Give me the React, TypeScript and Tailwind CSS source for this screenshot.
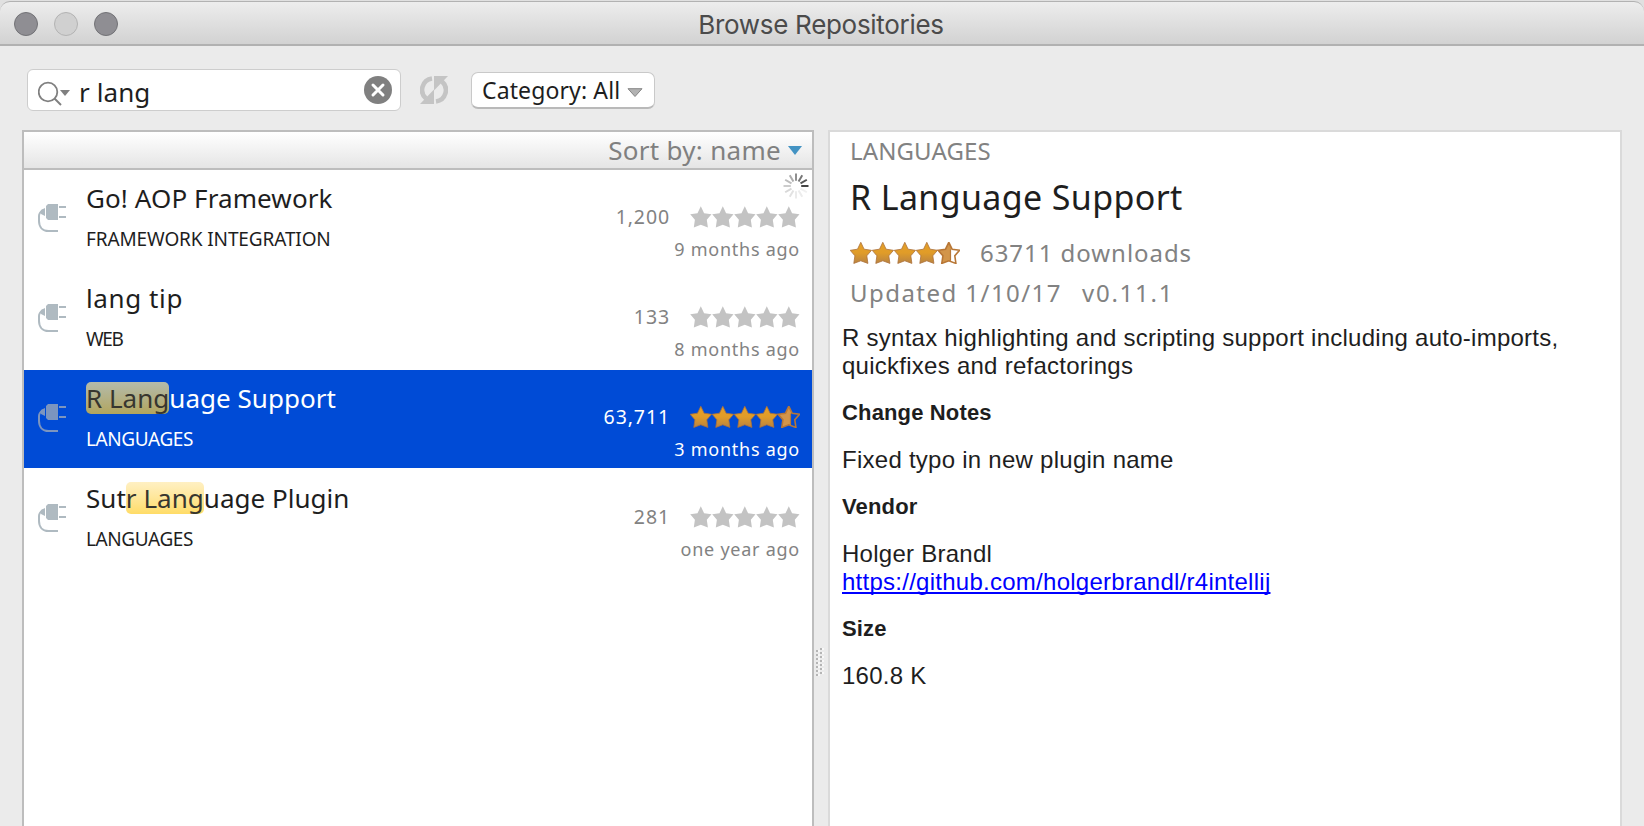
import { clsx } from 'clsx';

const STAR = 'M10.8 .3 L14.1 7.2 L21.5 8.3 L16.8 13.8 L17.9 21.4 L10.8 18.8 L3.8 21.4 L4.9 13.8 L.2 8.3 L7.5 7.2 Z';

type Plugin = {
  name: [string, string, string];
  nameClass: string;
  category: string;
  categoryClass: string;
  downloads: string;
  downloadsClass: string;
  updated: string;
  rating: number;
  selected?: boolean;
};

const plugins: Plugin[] = [
  {
    name: ['Go! AOP Framework', '', ''],
    nameClass: 'tracking-[0.1px]',
    category: 'FRAMEWORK INTEGRATION',
    categoryClass: 'tracking-[-0.12px]',
    downloads: '1,200',
    downloadsClass: 'tracking-[0.9px]',
    updated: '9 months ago',
    rating: 0,
  },
  {
    name: ['lang tip', '', ''],
    nameClass: 'tracking-[0.6px]',
    category: 'WEB',
    categoryClass: 'tracking-[-1.4px]',
    downloads: '133',
    downloadsClass: 'tracking-[0.9px]',
    updated: '8 months ago',
    rating: 0,
  },
  {
    name: ['', 'R Lang', 'uage Support'],
    nameClass: 'tracking-[0.02px]',
    category: 'LANGUAGES',
    categoryClass: 'tracking-[-0.4px]',
    downloads: '63,711',
    downloadsClass: 'tracking-[0.9px]',
    updated: '3 months ago',
    rating: 4.5,
    selected: true,
  },
  {
    name: ['Sut', 'r Lang', 'uage Plugin'],
    nameClass: 'tracking-[0.03px]',
    category: 'LANGUAGES',
    categoryClass: 'tracking-[-0.4px]',
    downloads: '281',
    downloadsClass: 'tracking-[0.9px]',
    updated: 'one year ago',
    rating: 0,
  },
];

function Stars({ rating }: { rating: number }) {
  return (
    <svg width="110" height="22" viewBox="0 0 110 22" className="shrink-0">
      <defs>
        <linearGradient id="gold" x1="0" y1="0" x2="0" y2="1">
          <stop offset="0" stopColor="#e5a029" />
          <stop offset="0.5" stopColor="#e09c28" />
          <stop offset="1" stopColor="#b98342" />
        </linearGradient>
        <clipPath id="leftHalf">
          <rect x="0" y="0" width="13" height="22" />
        </clipPath>
      </defs>
      {[0, 1, 2, 3, 4].map((i) => {
        const half = rating - i === 0.5;
        return (
          <g key={i} transform={`translate(${i * 22} 0)`}>
            {rating === 0 && <path d={STAR} fill="#c3c3c3" />}
            {rating > i && !half && <path d={STAR} fill="url(#gold)" stroke="#ac713b" strokeWidth="0.8" />}
            {half && (
              <>
                <path d={STAR} fill="#d2954a" clipPath="url(#leftHalf)" />
                <path d={STAR} fill="none" stroke="#b87736" strokeWidth="1.6" />
                <path d="M12.5 7.5 V18.5" stroke="#b87736" strokeWidth="1.2" />
              </>
            )}
          </g>
        );
      })}
    </svg>
  );
}

function PlugIcon({ color }: { color: string }) {
  return (
    <svg width="28" height="28" viewBox="0 0 28 28" className="mt-[34px] shrink-0">
      <path d="M10 0 H20 V16 H10 L8 14 V2 Z" fill={color} />
      <path d="M21 3 H28 M21 13 H28" stroke={color} strokeWidth="2" />
      <path d="M7 4 V12 L3 10 V6 Z" fill={color} />
      <path d="M5 6 C2 8 1 9 1 12 V17 C1 23 4.500 27 10.500 27 H20" fill="none" stroke={color} strokeWidth="2" />
    </svg>
  );
}

function PluginRow({ plugin }: { plugin: Plugin }) {
  const { selected } = plugin;
  const [before, match, after] = plugin.name;
  return (
    <li
      className={clsx(
        'mb-[2px] flex h-[98px] pr-3 pl-[14px]',
        selected ? 'bg-[#004bd6] text-white' : 'bg-white text-[#1e1e1e]',
      )}
    >
      <PlugIcon color={selected ? '#7c95bf' : '#afbac1'} />
      <div className="ml-5 flex-1 pt-[10px]">
        <div className={clsx('flex h-9 pt-[2px] text-[26px] leading-8 whitespace-pre', plugin.nameClass)}>
          <span>{before}</span>
          {match && (
            <mark
              className={clsx(
                'h-8 rounded-[5px] bg-linear-to-b text-[#37362f]',
                selected ? 'from-[#b4bbab] to-[#b2a55c]' : 'from-[#fff0c3] to-[#ffdc66]',
              )}
            >
              {match}
            </mark>
          )}
          <span>{after}</span>
        </div>
        <div className={clsx('mt-[11px] text-[19px] leading-6', plugin.categoryClass)}>{plugin.category}</div>
      </div>
      <div className={clsx('flex flex-col items-end pt-[34px]', !selected && 'text-[#828282]')}>
        <div className="flex h-6 items-end gap-[20px]">
          <span className={clsx('-mb-px text-[19.5px] leading-6', plugin.downloadsClass)}>{plugin.downloads}</span>
          <Stars rating={plugin.rating} />
        </div>
        <div className="mt-[9px] text-[18px] leading-6 tracking-[0.75px]">{plugin.updated}</div>
      </div>
    </li>
  );
}

const spokes = ['#444', '#f0f0f0', '#ececec', '#ebebeb', '#e2e2e2', '#d8d8d8', '#cccccc', '#bdbdbd', '#acacac', '#8f8f8f', '#777', '#555'];

function Spinner() {
  return (
    <svg width="26" height="26" viewBox="-13 -13 26 26" className="absolute top-[3px] right-[3px]">
      {spokes.map((c, i) => (
        <path key={i} d="M5.200 0 H12.500" stroke={c} strokeWidth="2" transform={`rotate(${i * 30})`} />
      ))}
    </svg>
  );
}

function TitleBar() {
  return (
    <header className="h-[46px] bg-[#e0e0e0] pt-[1px]">
      <div className="flex h-[45px] items-start rounded-t-[10px] border-t border-b-2 border-t-[#b2b2b2] border-b-[#b1b1b1] bg-linear-to-b from-[#ededed] to-[#d2d2d2] pl-[14px]">
        <div className="flex w-[240px] gap-4 pt-[10px]">
          <span className="size-6 rounded-full border border-[#727276] bg-[#8f8e93]" />
          <span className="size-6 rounded-full border border-[#b3b3b3] bg-[#d0d0d0]" />
          <span className="size-6 rounded-full border border-[#727276] bg-[#8f8e93]" />
        </div>
        <h1 className="mr-[256px] flex-1 pt-[9px] text-center font-['Inter',sans-serif] text-[26px] leading-7 tracking-[-0.3px] text-[#4b4b4b]">
          Browse Repositories
        </h1>
      </div>
    </header>
  );
}

function Toolbar() {
  return (
    <div className="flex h-[84px] items-start pt-[23px] pl-[27px]">
      <div className="flex h-[42px] w-[374px] rounded-[6px] border border-[#cdcdcd] bg-white pr-2 pl-[10px]">
        <svg width="34" height="26" viewBox="0 0 34 26" className="mt-[11px] shrink-0">
          <circle cx="10" cy="11" r="9.300" fill="none" stroke="#808080" strokeWidth="1.800" />
          <path d="M16.500 17.500 L23 24" stroke="#808080" strokeWidth="2" />
          <path d="M22 9 H32 L27 15 Z" fill="#808080" />
        </svg>
        <span className="ml-[7px] flex-1 pt-[6px] text-[26px] leading-8 tracking-[0.1px] text-[#1e1e1e]">r lang</span>
        <svg width="28" height="28" viewBox="0 0 28 28" className="mt-[6px] shrink-0">
          <circle cx="14" cy="14" r="14" fill="#808080" />
          <path d="M9 9 L19 19 M19 9 L9 19" stroke="#fff" strokeWidth="3" strokeLinecap="round" />
        </svg>
      </div>
      <svg width="28" height="28" viewBox="0 0 28 28" className="mt-[7px] ml-[19px] shrink-0">
        <path d="M12 2.500 A11.500 11.500 0 0 0 6 22.500" fill="none" stroke="#c4c4c4" strokeWidth="4.600" />
        <path d="M16 25.500 A11.500 11.500 0 0 0 22 5.500" fill="none" stroke="#c4c4c4" strokeWidth="4.600" />
        <path d="M14 13.500 V28 H0 Z M14 14.500 V0 H28 Z" fill="#c4c4c4" />
      </svg>
      <div className="mt-[3px] ml-[23px] flex h-[37px] w-[184px] rounded-[7px] border border-b-2 border-[#c9c9c9] border-b-[#b9b9b9] bg-white pl-[10px]">
        <span className="text-[23px] leading-[34px] tracking-[0.12px] whitespace-nowrap text-[#1e1e1e]">Category: All</span>
        <svg width="16" height="10" viewBox="0 0 16 10" className="mt-[15px] ml-[7px] shrink-0">
          <path d="M1 .7 H15 L8 8.500 Z" fill="#b2b2b2" stroke="#858585" strokeWidth="1" />
        </svg>
      </div>
    </div>
  );
}

function Details() {
  return (
    <section className="w-[794px] border-2 border-b-0 border-[#dadada] bg-white pt-[3px] pl-[12px] text-[#1e1e1e]">
      <div className="pl-[8px]">
        <div className="text-[24px] leading-8 tracking-[0.12px] text-[#828282]">LANGUAGES</div>
        <h2 className="mt-[10px] text-[34px] leading-10 tracking-[0.36px]">R Language Support</h2>
        <div className="mt-[20px] flex h-8 pt-[5px] text-[24px] text-[#828282]">
          <Stars rating={4.5} />
          <span className="-mt-[5px] ml-[20px] leading-8 tracking-[0.95px]">63711 downloads</span>
        </div>
        <div className="mt-[8px] flex text-[24px] leading-8 text-[#828282]">
          <span className="w-[232px] tracking-[1.45px]">Updated 1/10/17</span>
          <span className="tracking-[1.75px]">v0.11.1</span>
        </div>
      </div>
      <div className="mt-[15px] font-['Liberation_Sans',Arial,sans-serif] text-[24px] leading-7 tracking-[0.26px] whitespace-nowrap">
        <p>
          R syntax highlighting and scripting support including auto-imports,
          <br />
          quickfixes and refactorings
        </p>
        <h3 className="mt-[19px] text-[22px] font-bold tracking-[0.15px]">Change Notes</h3>
        <p className="mt-[19px]">Fixed typo in new plugin name</p>
        <h3 className="mt-[19px] text-[22px] font-bold tracking-[0.15px]">Vendor</h3>
        <p className="mt-[19px]">Holger Brandl</p>
        <p className="text-[#0000ff]">
          <a className="underline decoration-2 underline-offset-[2px] [text-decoration-skip-ink:none]">
            https://github.com/holgerbrandl/r4intellij
          </a>
        </p>
        <h3 className="mt-[19px] text-[22px] font-bold tracking-[0.15px]">Size</h3>
        <p className="mt-[19px]">160.8 K</p>
      </div>
    </section>
  );
}

export default function App() {
  return (
    <div className="flex h-[826px] w-[1644px] flex-col overflow-hidden bg-[#ebebeb] font-['Noto_Sans',sans-serif]">
      <TitleBar />
      <Toolbar />
      <main className="flex flex-1 pl-[22px]">
        <section className="flex w-[792px] flex-col border-2 border-b-0 border-[#bdbdbd] bg-white">
          <div className="flex h-[38px] justify-end border-b-2 border-[#bdbdbd] bg-linear-to-b from-white to-[#e5e5e5] pr-[10px]">
            <span className="text-[26px] leading-9 tracking-[0.3px] text-[#808080]">Sort by: name</span>
            <svg width="14" height="9" viewBox="0 0 14 9" className="mt-[14px] ml-[7px] shrink-0">
              <path d="M0 0 H14 L7 9 Z" fill="#4393c3" />
            </svg>
          </div>
          <ul className="relative">
            {plugins.map((p) => (
              <PluginRow key={p.name.join('')} plugin={p} />
            ))}
            <Spinner />
          </ul>
        </section>
        <div className="flex w-[14px] pt-[518px] pl-px">
          <svg width="10" height="30" viewBox="0 0 10 30">
            {[0, 1, 2, 3, 4, 5, 6].map((i) => (
              <g key={i}>
                <rect x="1" y={i * 4 + 2} width="2" height="2" fill="#b5b5b5" />
                <rect x="5" y={i * 4} width="2" height="2" fill="#b5b5b5" />
                <rect x="3" y={i * 4 + 2} width="2" height="2" fill="#f8f8f8" />
                <rect x="7" y={i * 4} width="2" height="2" fill="#f8f8f8" />
              </g>
            ))}
          </svg>
        </div>
        <Details />
      </main>
    </div>
  );
}
